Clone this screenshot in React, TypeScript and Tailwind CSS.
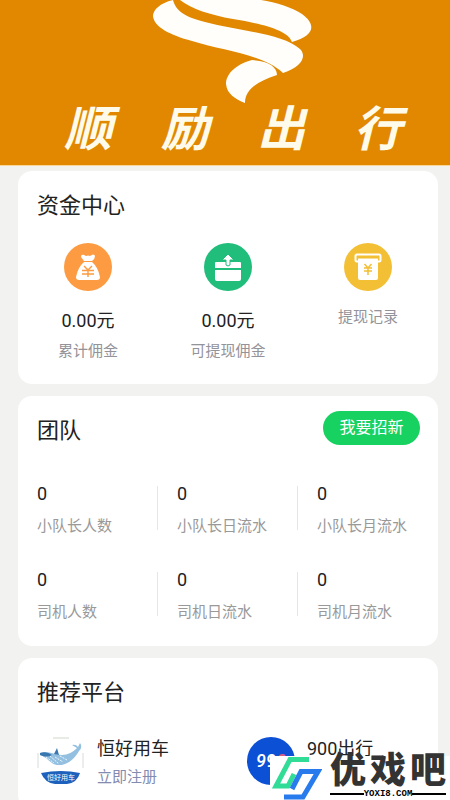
import React from "react";

const FONT = "font-[Roboto,'Noto_Sans_CJK_SC',sans-serif]";

function RibbonLogo() {
  return (
    <svg viewBox="0 0 200 110" className="h-[110px] w-[200px]" fill="#fffefa" aria-hidden="true">
      <path d="M50 0H131C146 2 163 8 172 14C187 25 184 36 162 42C158 30 133 24 103 19C80 15 62 9 50 0Z" />
      <path d="M43 0C30 3 23 10 23 16C24 27 40 35 62 41C94 51 132 54 153 73C172 67 177 56 170 49C152 33 108 31 75 22C55 17 46 11 43 0Z" />
      <path d="M122 60C104 65 96 75 96 84C97 94 105 99 115 103C115 91 125 82 147 75C147 67 139 61 122 60Z" />
    </svg>
  );
}

function MoneyBagIcon() {
  return (
    <svg viewBox="0 0 48 48" className="size-12" aria-hidden="true">
      <circle cx="24" cy="24" r="24" fill="#fc9b41" />
      <path d="M17 14Q17 11 20 12L22 13Q24 12 26 13Q30 10 31 13Q31 16 28 18H20Z" fill="#fff" />
      <path d="M20 19H28Q34 24 36 34Q36 37 33 37H15Q12 37 12 34Q14 24 20 19Z" fill="#fff" />
      <path d="M20 23L24 27L28 23M18 27.5H30M18 31H30M24 27V34" fill="none" stroke="#fc9b41" strokeWidth="1.4" />
    </svg>
  );
}

function WithdrawIcon() {
  return (
    <svg viewBox="0 0 48 48" className="size-12" aria-hidden="true">
      <circle cx="24" cy="24" r="24" fill="#20bd7b" />
      <path d="M12 19H36Q37 19 37 20V25H11V20Q11 19 12 19ZM11 27H37V36Q37 38 35 38H13Q11 38 11 36Z" fill="#fff" />
      <path d="M24 11L30 17H26V22Q24 24 22 22V17H18Z" fill="#fff" stroke="#20bd7b" strokeWidth="1" />
    </svg>
  );
}

function RecordIcon() {
  return (
    <svg viewBox="0 0 48 48" className="size-12" aria-hidden="true">
      <circle cx="24" cy="24" r="24" fill="#f2bf35" />
      <rect x="11.5" y="11.5" width="25" height="7" rx="1.5" fill="none" stroke="#fff" strokeWidth="2" />
      <path d="M14 15H34V35Q34 37 32 37H16Q14 37 14 35Z" fill="#fff" />
      <path d="M13 15H35" stroke="#f2bf35" strokeWidth="1" />
      <path d="M20.5 21L24 25L27.5 21M20 25H28M20 28H28M24 25V32" fill="none" stroke="#f2bf35" strokeWidth="1.5" />
    </svg>
  );
}

function WhaleLogo() {
  return (
    <span className="relative block size-12 shrink-0 overflow-hidden">
      <svg viewBox="0 0 48 48" className="size-12" aria-hidden="true">
        <path d="M16 1H32" stroke="#cfd8ca" />
        <path d="M1 16V31M46 16V31" stroke="#d8dad9" />
        <path d="M3 16C11 13 17 18 25 18C31 18 36 15 40 11L35 8Q39 7 41 10L43 6Q46 10 42 14C37 23 29 29 20 28C13 27 12 21 3 18Z" fill="#93bfe0" />
        <path d="M3 16Q10 14 15 18Q10 21 3 18ZM17 17L20 11L22 18M30 17L39 12" fill="#3a77ae" />
        <path d="M9 20L17 26M13 19L22 27M18 20L26 25M23 19L30 23" stroke="#eef7fc" strokeDasharray="2 1" />
        <path d="M4 36Q24 32 43 36Q40 46 30 47H18Q8 46 4 36Z" fill="#1d61bc" />
      </svg>
      <span className="absolute inset-x-0 bottom-0 text-center text-[7px] leading-[14px] text-white">恒好用车</span>
    </span>
  );
}

function NineLogo() {
  return (
    <span className="flex size-12 shrink-0 items-center justify-center rounded-full bg-[#0c50d5] text-lg font-medium italic leading-none text-white">
      99<span className="text-[#df5d7c]">0</span>
    </span>
  );
}

function Card({ title, action, children }: { title: string; action?: React.ReactNode; children: React.ReactNode }) {
  return (
    <section className="rounded-[14px] bg-white pt-[13px]">
      <div className="flex h-11 items-center justify-between pr-[18px] pl-[19px]">
        <h2 className="text-[22px] leading-8">{title}</h2>
        {action}
      </div>
      {children}
    </section>
  );
}

const funds = [
  { icon: <MoneyBagIcon />, value: "0.00元", label: "累计佣金" },
  { icon: <WithdrawIcon />, value: "0.00元", label: "可提现佣金" },
  { icon: <RecordIcon />, label: "提现记录" },
];

const stats = ["小队长人数", "小队长日流水", "小队长月流水", "司机人数", "司机日流水", "司机月流水"];

const platforms = [
  { id: "henghao", logo: <WhaleLogo />, name: "恒好用车", link: "立即注册" },
  { id: "900", logo: <NineLogo />, name: "900出行" },
];

function Watermark() {
  return (
    <div className="absolute right-0 bottom-0 flex h-11 w-[180px] bg-white pr-1">
      <svg viewBox="0 0 52 44" className="h-11 w-[52px] shrink-0" fill="none" strokeWidth="5" aria-hidden="true">
        <path d="M39 3.5H20L6 30H18L24 18" stroke="#31dc96" />
        <path d="M14 41H33L48 15.5H31L22 33" stroke="#287bed" />
      </svg>
      <div className="ml-2 min-w-0 flex-1">
        <div className="flex justify-between text-[36px] font-black leading-[30px] text-[#333]">
          <span>优</span><span>戏</span><span>吧</span>
        </div>
        <div className="mt-0.5 flex items-center text-[9px] font-bold leading-3 text-black font-['Liberation_Mono',monospace]">
          <span className="h-0.5 flex-1 bg-black" />YOXI8.COM<span className="h-0.5 flex-1 bg-black" />
        </div>
      </div>
    </div>
  );
}

export default function App() {
  return (
    <div className={`relative h-screen overflow-hidden bg-[#f2f2f0] text-[#222] ${FONT}`}>
      <header className="flex h-[166px] flex-col items-center border-b border-[#fbd798] bg-[#e18800]">
        <div className="h-[104px] pl-2.5"><RibbonLogo /></div>
        <h1 className="grid w-full grid-cols-4 pr-6 pl-10 text-center text-[48px] font-bold italic leading-[52px] text-[#fffbea]">
          <span>顺</span>
          <span>励</span>
          <span>出</span>
          <span>行</span>
        </h1>
      </header>
      <main className="flex flex-col gap-3 pt-[5px] pr-3 pl-[18px]">
        <Card title="资金中心">
          <div className="grid grid-cols-3 pt-[15px] pb-[21px]">
            {funds.map((f) => (
              <button key={f.label} className="flex flex-col items-center">
                {f.icon}
                {f.value && <span className="mt-4 text-lg leading-7">{f.value}</span>}
                <span className={`text-[15px] leading-6 text-[#939399] ${f.value ? "mt-1" : "mt-3.5"}`}>{f.label}</span>
              </button>
            ))}
          </div>
        </Card>
        <Card
          title="团队"
          action={<button className="mb-1.5 h-[34px] w-[97px] rounded-full bg-[#17d161] text-base text-white">我要招新</button>}
        >
          <dl className="grid grid-cols-3 gap-y-[30px] pt-[29px] pb-[22px]">
            {stats.map((label) => (
              <div
                key={label}
                className="grid h-14 grid-cols-[1fr_1px] gap-y-2 pl-[19px] after:col-start-2 after:row-span-2 after:row-start-1 after:h-11 after:self-start after:mt-1 after:bg-[#e6e6e6] after:content-[''] nth-[3n]:after:hidden"
              >
                <dt className="col-start-1 row-start-2 text-[15px] leading-6 text-[#999]">{label}</dt>
                <dd className="col-start-1 row-start-1 text-lg leading-6">0</dd>
              </div>
            ))}
          </dl>
        </Card>
        <Card title="推荐平台">
          <div className="grid grid-cols-2 pt-[22px] pb-5">
            {platforms.map((p) => (
              <a key={p.id} href={`#${p.id}`} className="flex gap-3 pl-[19px]">
                {p.logo}
                <span className="flex flex-col gap-1">
                  <span className="text-lg leading-6">{p.name}</span>
                  {p.link && <span className="text-[15px] leading-6 text-[#838bb0]">{p.link}</span>}
                </span>
              </a>
            ))}
          </div>
        </Card>
      </main>
      <Watermark />
    </div>
  );
}
